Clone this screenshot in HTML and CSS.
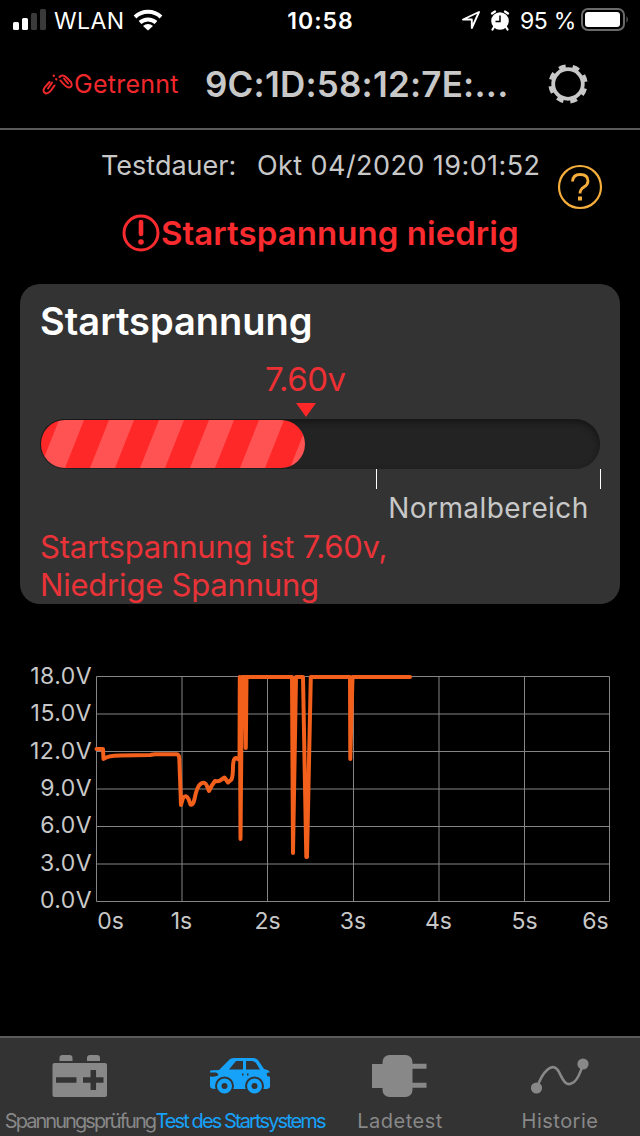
FILE: index.html
```html
<!DOCTYPE html>
<html lang="de">
<head>
  <meta charset="UTF-8">
  <meta name="viewport" content="width=device-width, initial-scale=1.0">
  <title>Test des Startsystems</title>
  <link rel="stylesheet" href="styles.css">
</head>
<body>
  <div class="app">
    <div class="status-bar">
      <div class="status-left">
        <svg class="signal" width="33" height="22" viewBox="0 0 33 22">
          <rect x="0" y="13" width="6" height="8" rx="1.5" fill="#fff"/>
          <rect x="9" y="9" width="6" height="12" rx="1.5" fill="#fff"/>
          <rect x="18" y="4" width="6" height="17" rx="1.5" fill="#3a3a3a"/>
          <rect x="27" y="0" width="6" height="21" rx="1.5" fill="#3a3a3a"/>
        </svg>
        <span class="carrier">WLAN</span>
        <svg class="wifi" width="30" height="22" viewBox="0 0 30 22">
          <path d="M2 8a19 19 0 0 1 26 0M7 13.500a12 12 0 0 1 16 0" fill="none" stroke="#fff" stroke-width="4"/>
          <path d="M15 21.500L10 17a7.500 7.500 0 0 1 10 0z" fill="#fff"/>
        </svg>
      </div>
      <span class="clock">10:58</span>
      <div class="status-right">
        <svg width="20" height="20" viewBox="0 0 20 20">
          <path d="M2 9.500L18 2L10.800 18V9.500z" fill="none" stroke="#fff" stroke-width="1.900" stroke-linejoin="round"/>
        </svg>
        <svg class="alarm" width="20" height="21" viewBox="0 0 20 21">
          <circle cx="10" cy="11" r="8.800" fill="#fff"/>
          <path d="M2 3.500L5 1.500M15 1.500l3 2M4 17l-1.500 2.500M16 17l1.500 2.500" stroke="#fff" stroke-width="2.200" stroke-linecap="round"/>
          <path d="M10 5.500V11.500H5.500" fill="none" stroke="#000" stroke-width="1.500"/>
        </svg>
        <span class="percent">95 %</span>
        <svg class="battery" width="48" height="24" viewBox="0 0 48 24">
          <rect x="1" y="1" width="42" height="21" rx="6" fill="none" stroke="#6a6a6a" stroke-width="2"/>
          <rect x="4" y="4" width="35" height="15" rx="3" fill="#fff"/>
          <path d="M45.500 8q2.500 3.500 0 7z" fill="#6a6a6a"/>
        </svg>
      </div>
    </div>

    <div class="header">
      <div class="connection">
        <svg width="32" height="22" viewBox="0 0 32 22">
          <g fill="none" stroke="#f0282c" stroke-width="2" stroke-linecap="round">
            <path d="M7.500 9L3 14Q0 18.500 3 20Q6 21.500 9 17.500L12.500 12.500"/>
            <path d="M10 9.500L6 15.500"/>
            <path d="M17.500 4Q20 1 24 4L29 9Q31 14 27 14.500Q24 14.500 18.500 7.500"/>
            <path d="M22 5.500l4 5"/>
            <path d="M11.500 2.500l.5.500M14 6l.5.500"/>
          </g>
        </svg>
        <span>Getrennt</span>
      </div>
      <span class="device">9C:1D:58:12:7E:...</span>
      <svg class="gear" width="40" height="40" viewBox="0 0 40 40">
        <circle cx="20" cy="20" r="14.800" fill="none" stroke="#c8c8c8" stroke-width="3.800"/>
        <circle cx="20" cy="20" r="17.700" fill="none" stroke="#c8c8c8" stroke-width="3.800" pathLength="80" stroke-dasharray="5 5" transform="rotate(-30 20 20)"/>
      </svg>
    </div>

    <div class="summary">
      <div class="test-time"><span class="time-label">Testdauer:</span><span class="time-value">Okt 04/2020 19:01:52</span></div>
      <svg class="help" width="46" height="46" viewBox="0 0 46 46">
        <circle cx="23" cy="23" r="21" fill="none" stroke="#f5ae3b" stroke-width="2.200"/>
        <path d="M15.500 17.500Q16 10.500 23 10.500Q31 10.500 31 17Q31 20.500 27 23Q23 25.500 23 29.500" fill="none" stroke="#f5ae3b" stroke-width="2.800"/>
        <rect x="21" y="32.500" width="4" height="4" fill="#f5ae3b"/>
      </svg>
      <div class="warning">
        <svg width="38" height="38" viewBox="0 0 38 38">
          <circle cx="19" cy="19" r="17" fill="none" stroke="#f92b2f" stroke-width="3"/>
          <path d="M19 8V20" stroke="#f92b2f" stroke-width="4.600" stroke-linecap="round"/>
          <circle cx="19" cy="28" r="2.800" fill="#f92b2f"/>
        </svg>
        <span class="warning-text">Startspannung niedrig</span>
      </div>
    </div>

    <div class="card">
      <h2>Startspannung</h2>
      <div class="reading">7.60v</div>
      <svg class="marker" width="20" height="14" viewBox="0 0 20 14"><path d="M0 0H20L10 14z" fill="#ff2828"/></svg>
      <div class="gauge">
        <svg class="gauge-fill" width="264" height="48">
          <defs>
            <pattern id="stripes" width="50" height="48" patternUnits="userSpaceOnUse">
              <rect width="50" height="48" fill="#ff2828"/>
              <path d="M18 0H43L24 48H-1zM68 0H93L74 48H49z" fill="#ff5253"/>
            </pattern>
          </defs>
          <rect width="264" height="48" rx="24" fill="url(#stripes)"/>
        </svg>
      </div>
      <div class="range"><span>Normalbereich</span></div>
      <p class="result">Startspannung ist 7.60v,<br>Niedrige Spannung</p>
    </div>

    <svg class="chart" width="640" height="300" viewBox="0 650 640 300">
      <path class="grid" d="M96.500 676.500H609.500M96.500 714H609.500M96.500 751.500H609.500M96.500 789H609.500M96.500 826.500H609.500M96.500 864H609.500M96.500 901.500H609.500M96.500 676.500V901.500M182 676.500V901.500M267.500 676.500V901.500M353.500 676.500V901.500M439 676.500V901.500M524.500 676.500V901.500M609.500 676.500V901.500"/>
      <g class="axis axis-y">
        <text x="92" y="684">18.0V</text>
        <text x="92" y="721">15.0V</text>
        <text x="92" y="759">12.0V</text>
        <text x="92" y="796">9.0V</text>
        <text x="92" y="833">6.0V</text>
        <text x="92" y="871">3.0V</text>
        <text x="92" y="908">0.0V</text>
      </g>
      <g class="axis axis-x">
        <text x="110.500" y="929">0s</text>
        <text x="181.500" y="929">1s</text>
        <text x="267.500" y="929">2s</text>
        <text x="353" y="929">3s</text>
        <text x="438.500" y="929">4s</text>
        <text x="524.500" y="929">5s</text>
        <text x="595.500" y="929">6s</text>
      </g>
      <path class="trace" d="M96.500 749H103L103.500 759Q108 755.500 120 755.500L150 755L155 754.300H176Q179 754 179.300 758L181 805L183 798Q186 794 188.500 799L190.500 804.500Q193 806 194.500 799Q197 786 201 783.500Q205 781.500 206.500 785L209 791L211.500 786L215 781Q219 782 221.500 779.500L224.500 777.500L228 782.500L231.500 779.500Q233 776 233 766Q233.500 757.500 236 758L239.500 760L239.800 677L240.500 839L242 677H245L245.800 748L246.500 677H292L293 853L296 677H303L306.300 857H307L310.800 677H350L350.300 759L352.500 677H410"/>
    </svg>

    <div class="tab-bar">
      <div class="tab">
        <svg width="56" height="44" viewBox="1 0 56 44">
          <path d="M8.500 7V4Q8.500 1 11.500 1H18.500Q21.500 1 21.500 4V7zM36 7V4Q36 1 39 1H46Q49 1 49 4V7z" fill="#888"/>
          <rect x="1.500" y="9" width="54.500" height="34" rx="2" fill="#888"/>
          <path d="M5 26H25.500M32 26H52.500M42.300 16V36" stroke="#333" stroke-width="5.500"/>
        </svg>
        <span class="tab-label label-voltage">Spannungsprüfung</span>
      </div>
      <div class="tab active">
        <svg width="60" height="44" viewBox="0 0 60 44">
          <path d="M0 17Q1 16 9 16L20 5Q22 4 25 4H43Q46 4 48 6L54 15Q60 16 60 19V33Q59 35 55 35H5Q0 35 0 32z" fill="#17a2fa"/>
          <path d="M19 15.500L26 7H33V15.500zM36 7H42Q44 7 46 9L50 15.500H36z" fill="#333"/>
          <path d="M0 18.500H6Q9 19.500 8 21.500Q6 23 0 22.500zM60 18.500H58Q56 19.500 57 21.500Q58 23 60 22.500zM32 19.500h1.500v2h-1.500zM37 19.500h1.500v2h-1.500z" fill="#333"/>
          <g fill="#17a2fa" stroke="#333" stroke-width="2"><circle cx="14.500" cy="32" r="8.500"/><circle cx="44.500" cy="32" r="8.500"/></g>
          <circle cx="14.500" cy="32" r="3" fill="#333"/><circle cx="44.500" cy="32" r="3" fill="#333"/>
        </svg>
        <span class="tab-label label-start">Test des Startsystems</span>
      </div>
      <div class="tab">
        <svg width="56" height="44" viewBox="1 0 56 44">
          <rect x="1" y="10" width="14" height="24" fill="#888"/>
          <rect x="11.500" y="1" width="30" height="42" rx="7" fill="#888"/>
          <path d="M40 12.300H55.500M40 31.300H55.500" stroke="#888" stroke-width="5"/>
        </svg>
        <span class="tab-label label-charge">Ladetest</span>
      </div>
      <div class="tab">
        <svg width="60" height="44" viewBox="0 0 60 44">
          <path d="M7 34C12 18 23 6 29 18C33 26 36 34 44 28Q49 24 53 10" fill="none" stroke="#888" stroke-width="2.600"/>
          <circle cx="6.500" cy="34" r="5.600" fill="#888"/>
          <circle cx="53" cy="10" r="5.600" fill="#888"/>
        </svg>
        <span class="tab-label label-history">Historie</span>
      </div>
    </div>
  </div>
</body>
</html>
```

FILE: styles.css
```css
body {
  margin: 0;
  background-color: #000;
  font-family: Inter, Roboto, sans-serif;
  color: #c8c8c8;
}
.app {
  display: flex;
  flex-direction: column;
  width: 640px;
  height: 1136px;
  overflow: hidden;
  white-space: nowrap;
}

/* status bar */
.status-bar {
  display: grid;
  grid-template-columns: 1fr auto 1fr;
  align-items: center;
  box-sizing: border-box;
  height: 40px;
  padding: 0 11px 0 13px;
  color: #fff;
  font-size: 23px;
}
.status-left,
.status-right {
  display: flex;
  align-items: center;
}
.status-right {
  justify-content: flex-end;
}
.carrier {
  margin: 2px 9px 0 8px;
  letter-spacing: 0.4px;
}
.clock {
  margin: 2px 0 0 -1px;
  font-weight: 600;
  letter-spacing: 1px;
}
.alarm {
  margin: 0 10px 0 9px;
}
.percent {
  margin: 2px 5px 0 0;
  letter-spacing: -0.3px;
}

/* header */
.header {
  display: flex;
  align-items: center;
  box-sizing: border-box;
  height: 90px;
  padding: 0 52px 0 42px;
  border-bottom: 2px solid #5a5a5a;
}
.connection {
  display: flex;
  align-items: center;
  width: 163px;
  color: #f0282c;
  font-size: 25px;
  letter-spacing: 0.25px;
}
.device {
  flex: 1;
  font-size: 35px;
  font-weight: 600;
  letter-spacing: 0.2px;
}

/* test summary */
.summary {
  display: grid;
  grid-template-columns: 1fr 82px;
  grid-template-rows: 70px 84px;
  box-sizing: border-box;
  height: 154px;
}
.test-time {
  display: flex;
  padding: 19px 0 0 101px;
  font-size: 27px;
  line-height: 33px;
}
.time-label {
  width: 156px;
}
.time-value {
  letter-spacing: 0.43px;
}
.help {
  margin: 34px 0 0 -1px;
}
.warning {
  grid-column: 1 / 3;
  display: flex;
  align-items: flex-start;
  padding: 14px 0 0 122px;
  color: #f92b2f;
  font-size: 33px;
  font-weight: 600;
  line-height: 38px;
}
.warning-text {
  margin-left: 1px;
  letter-spacing: 0.05px;
}

/* voltage card */
.card {
  display: flex;
  flex-direction: column;
  box-sizing: border-box;
  height: 320px;
  margin: 0 20px;
  padding: 13px 20px 0;
  border-radius: 20px;
  background-color: #333;
}
.card h2 {
  margin: 0;
  color: #fff;
  font-size: 38px;
  font-weight: 600;
  line-height: 48px;
}
.reading {
  margin: 12px 0 0 225px;
  color: #ee2f33;
  font-size: 33px;
  letter-spacing: -0.5px;
  line-height: 44px;
}
.marker {
  margin: 2px 0 0 256px;
}
.gauge {
  box-sizing: border-box;
  height: 50px;
  margin-top: 2px;
  padding: 1px;
  border-radius: 25px;
  background-color: #232323;
  box-shadow: inset 0 3px 6px #151515;
}
.gauge-fill {
  display: block;
}
.range {
  display: flex;
  justify-content: center;
  box-sizing: border-box;
  width: 225px;
  height: 20px;
  margin-left: 336px;
  border: solid #fff;
  border-width: 0 1px;
  font-size: 28px;
  letter-spacing: 0.4px;
  line-height: 34px;
}
.range span {
  margin-top: 22px;
}
.result {
  margin: 39px 0 0;
  color: #e93338;
  font-size: 31px;
  letter-spacing: -0.2px;
  line-height: 38px;
}

/* chart */
.chart {
  display: block;
  margin-top: 46px;
}
.grid {
  fill: none;
  stroke: #858585;
  stroke-width: 1;
}
.axis {
  fill: #c8c8c8;
  font-size: 23px;
}
.axis-y {
  text-anchor: end;
  letter-spacing: 0.5px;
}
.axis-x {
  text-anchor: middle;
}
.trace {
  fill: none;
  stroke: #f2601c;
  stroke-width: 4;
  stroke-linecap: round;
  stroke-linejoin: round;
}

/* tab bar */
.tab-bar {
  display: grid;
  grid-template-columns: repeat(4, 160px);
  box-sizing: border-box;
  height: 100px;
  margin-top: auto;
  border-top: 2px solid #5a5a5a;
  background-color: #333;
  color: #888;
}
.tab {
  display: flex;
  flex-direction: column;
  align-items: center;
  padding-top: 16px;
}
.active {
  color: #17a2fa;
}
.tab-label {
  margin-top: 11px;
  font-size: 20px;
  line-height: 24px;
}
.label-voltage {
  letter-spacing: -1.95px;
}
.label-start {
  letter-spacing: -1.9px;
}
.label-charge,
.label-history {
  letter-spacing: 0.5px;
}
```
